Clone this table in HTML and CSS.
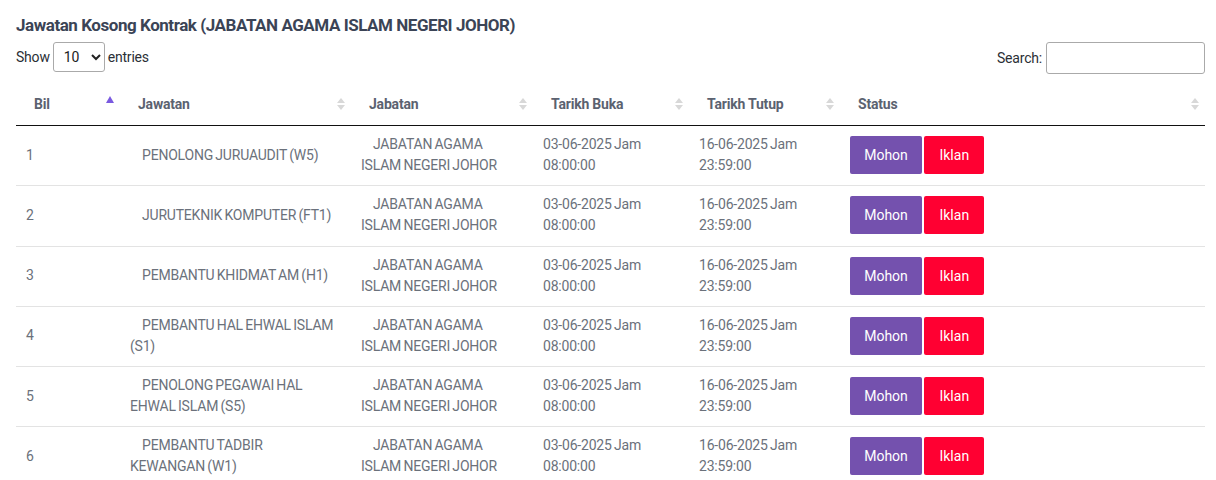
FILE: index.html
```html
<!DOCTYPE html>
<html lang="ms">
<head>
  <meta charset="UTF-8" />
  <meta name="viewport" content="width=device-width, initial-scale=1" />
  <title>Jawatan Kosong Kontrak</title>
  <link rel="stylesheet" href="styles.css">
</head>
<body>
  <h4 class="title">Jawatan Kosong Kontrak (JABATAN AGAMA ISLAM NEGERI JOHOR)</h4>
  <div class="dt-top">
    <label class="dt-length">Show
      <select>
        <option>10</option>
        <option>25</option>
        <option>50</option>
      </select>
      entries</label>
    <label class="dt-search">Search: <input type="search" /></label>
  </div>
  <table class="dt">
    <colgroup>
      <col style="width:104px">
      <col style="width:231px">
      <col style="width:182px">
      <col style="width:156px">
      <col style="width:151px">
      <col>
    </colgroup>
    <thead>
      <tr>
        <th class="sort-asc">Bil</th>
        <th class="sortable">Jawatan</th>
        <th class="sortable">Jabatan</th>
        <th class="sortable">Tarikh Buka</th>
        <th class="sortable">Tarikh Tutup</th>
        <th class="sortable">Status</th>
      </tr>
    </thead>
    <tbody>
      <tr>
        <td>1</td>
        <td><span class="ind"></span>PENOLONG JURUAUDIT (W5)</td>
        <td><span class="ind"></span>JABATAN AGAMA ISLAM NEGERI JOHOR</td>
        <td>03-06-2025 Jam 08:00:00</td>
        <td>16-06-2025 Jam 23:59:00</td>
        <td><a class="btn btn-mohon">Mohon</a> <a class="btn btn-iklan">Iklan</a></td>
      </tr>
      <tr>
        <td>2</td>
        <td><span class="ind"></span>JURUTEKNIK KOMPUTER (FT1)</td>
        <td><span class="ind"></span>JABATAN AGAMA ISLAM NEGERI JOHOR</td>
        <td>03-06-2025 Jam 08:00:00</td>
        <td>16-06-2025 Jam 23:59:00</td>
        <td><a class="btn btn-mohon">Mohon</a> <a class="btn btn-iklan">Iklan</a></td>
      </tr>
      <tr>
        <td>3</td>
        <td><span class="ind"></span>PEMBANTU KHIDMAT AM (H1)</td>
        <td><span class="ind"></span>JABATAN AGAMA ISLAM NEGERI JOHOR</td>
        <td>03-06-2025 Jam 08:00:00</td>
        <td>16-06-2025 Jam 23:59:00</td>
        <td><a class="btn btn-mohon">Mohon</a> <a class="btn btn-iklan">Iklan</a></td>
      </tr>
      <tr>
        <td>4</td>
        <td><span class="ind"></span>PEMBANTU HAL EHWAL ISLAM (S1)</td>
        <td><span class="ind"></span>JABATAN AGAMA ISLAM NEGERI JOHOR</td>
        <td>03-06-2025 Jam 08:00:00</td>
        <td>16-06-2025 Jam 23:59:00</td>
        <td><a class="btn btn-mohon">Mohon</a> <a class="btn btn-iklan">Iklan</a></td>
      </tr>
      <tr>
        <td>5</td>
        <td><span class="ind"></span>PENOLONG PEGAWAI HAL EHWAL ISLAM (S5)</td>
        <td><span class="ind"></span>JABATAN AGAMA ISLAM NEGERI JOHOR</td>
        <td>03-06-2025 Jam 08:00:00</td>
        <td>16-06-2025 Jam 23:59:00</td>
        <td><a class="btn btn-mohon">Mohon</a> <a class="btn btn-iklan">Iklan</a></td>
      </tr>
      <tr>
        <td>6</td>
        <td><span class="ind"></span>PEMBANTU TADBIR KEWANGAN (W1)</td>
        <td><span class="ind"></span>JABATAN AGAMA ISLAM NEGERI JOHOR</td>
        <td>03-06-2025 Jam 08:00:00</td>
        <td>16-06-2025 Jam 23:59:00</td>
        <td><a class="btn btn-mohon">Mohon</a> <a class="btn btn-iklan">Iklan</a></td>
      </tr>
    </tbody>
  </table>
</body>
</html>
```

FILE: styles.css
```css
* {
  box-sizing: border-box;
}
body {
  margin: 0;
  padding: 0 11px 0 16px;
  background: #fff;
  font-family: Roboto, 'Liberation Sans', sans-serif;
  font-size: 14px;
  color: #6b717b;
}
.title {
  margin: 0;
  padding-top: 15px;
  height: 40px;
  font-size: 17px;
  font-weight: 700;
  color: #3b4456;
  letter-spacing: -0.45px;
}
.dt-top {
  display: flex;
  justify-content: space-between;
  align-items: flex-start;
  height: 44px;
  color: #2b2f36;
}
.dt-length {
  display: flex;
  align-items: center;
  gap: 3px;
  height: 32px;
  margin-top: 1px;
  font-size: 14px;
  letter-spacing: -0.2px;
}
.dt-length select {
  width: 52px;
  height: 30px;
  padding: 0 4px 0 6px;
  border: 1px solid #aaa;
  border-radius: 3px;
  background: #fff;
  font: inherit;
  color: #222;
}
.dt-search {
  display: flex;
  align-items: center;
  gap: 4px;
  margin-top: 2px;
  font-size: 14px;
  letter-spacing: -0.2px;
}
.dt-search input {
  width: 159px;
  height: 32px;
  border: 1px solid #aaa;
  border-radius: 3px;
  font: inherit;
}
table.dt {
  width: 100%;
  border-collapse: collapse;
  table-layout: fixed;
}
.dt th {
  position: relative;
  padding: 10px 18px 11px;
  text-align: left;
  font-weight: 700;
  color: #5b6270;
  line-height: 20px;
  letter-spacing: -0.2px;
  border-bottom: 1px solid #111;
}
.dt th.sortable::before,
.dt th.sortable::after,
.dt th.sort-asc::before {
  content: "";
  position: absolute;
  right: 6px;
  border-left: 4px solid transparent;
  border-right: 4px solid transparent;
}
.dt th.sortable::before {
  top: 14px;
  border-bottom: 5px solid #d8d8d8;
}
.dt th.sortable::after {
  top: 21px;
  border-top: 5px solid #d8d8d8;
}
.dt th.sort-asc::before {
  top: 12px;
  right: 6px;
  border-bottom: 7px solid #7a5ae0;
}
.dt td {
  padding: 8px 16px 9.3px 10px;
  line-height: 21px;
  vertical-align: middle;
  letter-spacing: -0.2px;
  word-spacing: -1px;
  border-bottom: 1px solid #e3e3e3;
}
.ind {
  display: inline-block;
  width: 12px;
}
.btn {
  display: inline-block;
  height: 38px;
  line-height: 38px;
  text-align: center;
  border-radius: 2px;
  color: #fff;
  font-size: 14px;
  font-weight: 400;
  letter-spacing: 0;
  word-spacing: 0;
  cursor: pointer;
}
.btn-mohon {
  width: 72px;
  background: #7451ae;
}
.btn-iklan {
  width: 60px;
  background: #ff0032;
}
```
